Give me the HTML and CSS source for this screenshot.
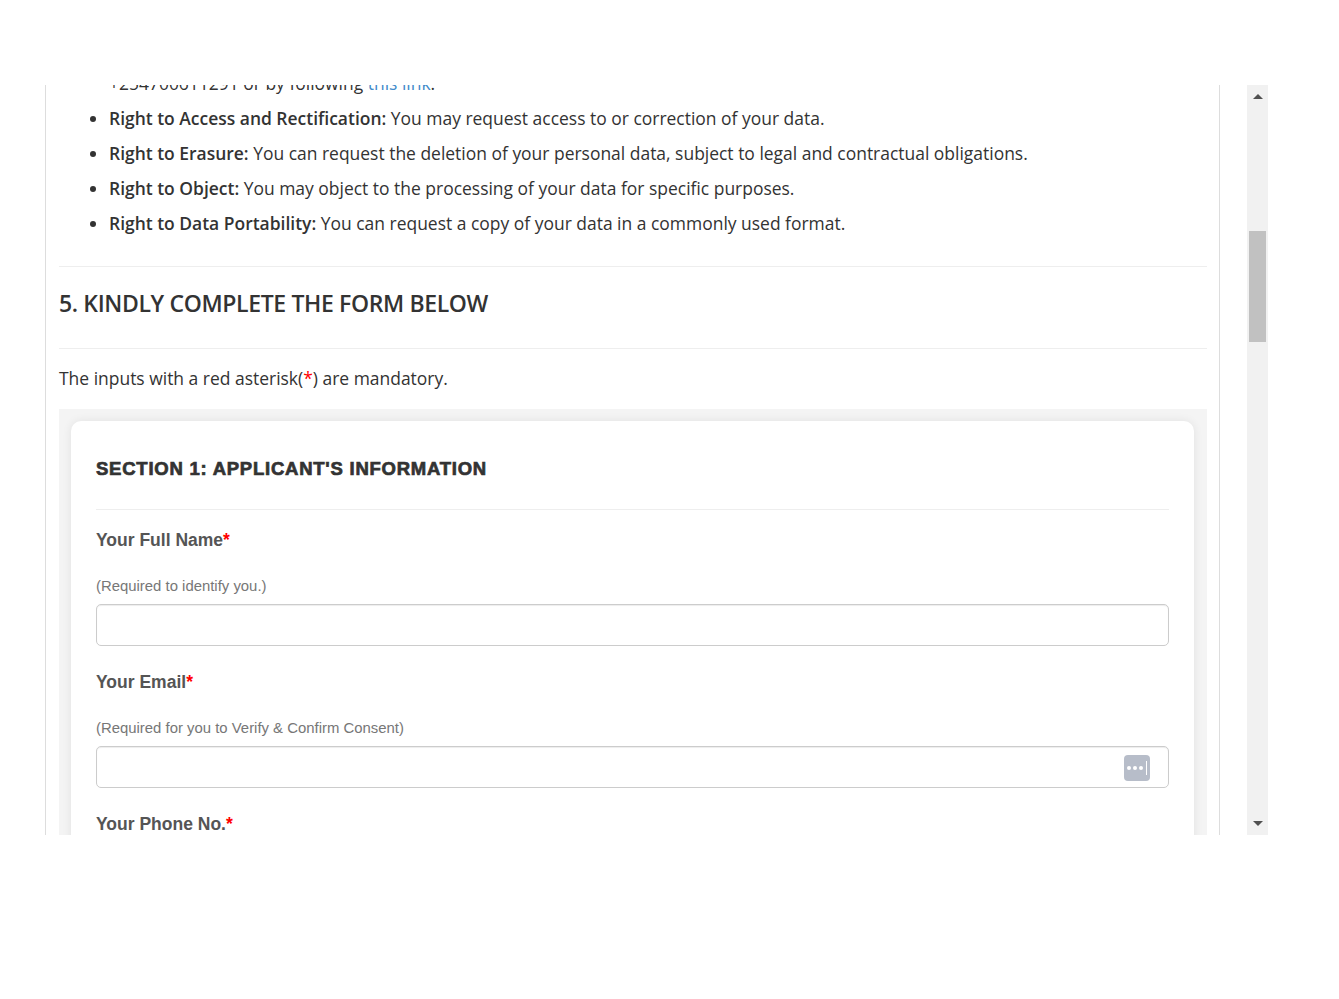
FILE: index.html
```html
<!DOCTYPE html>
<html lang="en">
<head>
  <meta charset="UTF-8" />
  <meta name="viewport" content="width=device-width, initial-scale=1.0" />
  <title>Consent Form</title>
  <link rel="stylesheet" href="styles.css">
</head>
<body>
  <div class="frame">
    <div class="panel">
      <div class="scroller">
        <ul class="rights">
          <li class="cut">+254700611291 or by following <a href="#">this link</a>.</li>
          <li><strong>Right to Access and Rectification:</strong> You may request access to or correction of your data.</li>
          <li><strong>Right to Erasure:</strong> You can request the deletion of your personal data, subject to legal and contractual obligations.</li>
          <li><strong>Right to Object:</strong> You may object to the processing of your data for specific purposes.</li>
          <li><strong>Right to Data Portability:</strong> You can request a copy of your data in a commonly used format.</li>
        </ul>
        <hr class="rule">
        <h2 class="title">5. KINDLY COMPLETE THE FORM BELOW</h2>
        <hr class="rule">
        <p class="note">The inputs with a red asterisk(<span class="req">*</span>) are mandatory.</p>

        <div class="form-wrap">
          <form class="card">
            <h3 class="section">SECTION 1: APPLICANT'S INFORMATION</h3>
            <div class="field">
              <label class="label">Your Full Name<span class="req">*</span></label>
              <p class="hint">(Required to identify you.)</p>
              <div class="input"></div>
            </div>
            <div class="field">
              <label class="label">Your Email<span class="req">*</span></label>
              <p class="hint">(Required for you to Verify &amp; Confirm Consent)</p>
              <div class="input">
                <svg class="key" width="26" height="26" viewBox="0 0 26 26">
                  <rect width="26" height="26" rx="4" fill="#b7bdc9"/>
                  <circle cx="5" cy="13" r="2" fill="#fff"/>
                  <circle cx="11" cy="13" r="2" fill="#fff"/>
                  <circle cx="17" cy="13" r="2" fill="#fff"/>
                  <rect x="22" y="6" width="1" height="14" fill="#fff"/>
                </svg>
              </div>
            </div>
            <div class="field">
              <label class="label">Your Phone No.<span class="req">*</span></label>
            </div>
          </form>
        </div>
      </div>
    </div>
    <div class="scrollbar">
      <span class="arrow up"></span>
      <div class="track"><div class="thumb"></div></div>
      <span class="arrow down"></span>
    </div>
  </div>
</body>
</html>
```

FILE: styles.css
```css
body {
  margin: 0;
  padding: 85px 0 0 45px;
  min-height: 914px;
  background: #fff;
  font-family: "Open Sans", sans-serif;
  color: #333;
}
.frame {
  display: flex;
  justify-content: space-between;
  width: 1223px;
  height: 750px;
}
.panel {
  width: 1173px;
  border-left: 1px solid #ddd;
  border-right: 1px solid #ddd;
  overflow: hidden;
}
.scroller {
  margin-top: -19px;
  padding: 0 12px 0 13px;
}
.rights {
  margin: 0;
  padding: 0 0 0 50px;
  font-size: 17.47px;
  line-height: 35px;
}
.cut {
  list-style: none;
}
.rights strong {
  font-weight: 600;
}
.rights a {
  color: #428bca;
  text-decoration: none;
}
.rule {
  margin: 0;
  border: 0;
  border-top: 1px solid #eee;
}
.rights + .rule {
  margin-top: 25px;
}
.title {
  margin: 0;
  padding: 20px 0 28px;
  font-size: 23px;
  line-height: 33px;
  font-weight: 600;
  letter-spacing: -0.36px;
}
.note {
  margin: 0;
  padding-top: 16px;
  font-size: 17.47px;
  line-height: 26px;
}
.req {
  color: #f00;
}
.form-wrap {
  margin-top: 18px;
  padding: 12px 13px 12px 12px;
  background: #f4f4f4;
}
.card {
  padding: 25px 25px 60px;
  background: #fff;
  border-radius: 10px;
  box-shadow: 0 0 10px rgba(0,0,0,0.08);
}
.section {
  margin: 0;
  padding: 11px 0 28px;
  border-bottom: 1px solid #eee;
  font-family: "Liberation Sans", Arial, sans-serif;
  font-size: 18.5px;
  line-height: 24px;
  font-weight: 700;
  letter-spacing: 0.76px;
  -webkit-text-stroke: 0.7px #333;
}
.field {
  padding-top: 26px;
}
.section + .field {
  padding-top: 20px;
}
.label {
  display: block;
  font-family: "Liberation Sans", Arial, sans-serif;
  font-size: 17.5px;
  line-height: 20px;
  font-weight: 700;
  color: #555;
}
.hint {
  margin: 0;
  padding-top: 26px;
  font-family: "Liberation Sans", Arial, sans-serif;
  font-size: 14.9px;
  line-height: 20px;
  color: #777;
}
.input {
  position: relative;
  height: 40px;
  margin-top: 8px;
  border: 1px solid #ccc;
  border-radius: 5px;
  box-shadow: inset 0 1px 1px rgba(0,0,0,0.075);
}
.key {
  position: absolute;
  top: 8px;
  right: 18px;
}
.scrollbar {
  display: flex;
  flex-direction: column;
  width: 21px;
  background: #f1f1f1;
}
.arrow {
  flex: none;
  height: 23px;
  display: flex;
  align-items: center;
  justify-content: center;
}
.arrow::before {
  content: "";
  border-left: 5px solid transparent;
  border-right: 5px solid transparent;
}
.arrow.up::before {
  border-bottom: 5px solid #505050;
}
.arrow.down::before {
  border-top: 5px solid #505050;
}
.track {
  flex: 1;
  padding: 123px 2px 0;
}
.thumb {
  height: 111px;
  background: #c1c1c1;
}
```
